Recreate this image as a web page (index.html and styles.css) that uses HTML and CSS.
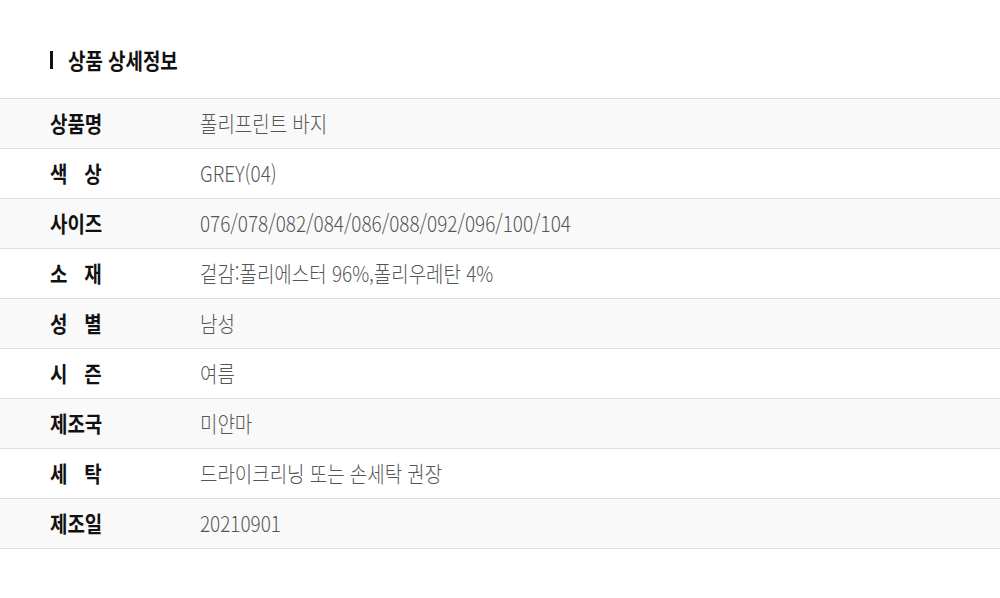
FILE: index.html
```html
<!DOCTYPE html>
<html lang="ko">
<head>
    <meta charset="UTF-8">
    <meta name="viewport" content="width=device-width, initial-scale=1.0">
    <title>상품 상세정보</title>
    <link rel="stylesheet" href="styles.css">
</head>
<body>
    <h2 class="title"><span class="txt">상품 상세정보</span></h2>
    <table class="info">
        <tr><th><span class="lbl">상품명</span></th><td><span class="val">폴리프린트 바지</span></td></tr>
        <tr><th><span class="lbl">색 상</span></th><td><span class="val">GREY(04)</span></td></tr>
        <tr><th><span class="lbl">사이즈</span></th><td><span class="val">076/078/082/084/086/088/092/096/100/104</span></td></tr>
        <tr><th><span class="lbl">소 재</span></th><td><span class="val">겉감:폴리에스터 96%,폴리우레탄 4%</span></td></tr>
        <tr><th><span class="lbl">성 별</span></th><td><span class="val">남성</span></td></tr>
        <tr><th><span class="lbl">시 즌</span></th><td><span class="val">여름</span></td></tr>
        <tr><th><span class="lbl">제조국</span></th><td><span class="val">미얀마</span></td></tr>
        <tr><th><span class="lbl">세 탁</span></th><td><span class="val">드라이크리닝 또는 손세탁 권장</span></td></tr>
        <tr><th><span class="lbl">제조일</span></th><td><span class="val">20210901</span></td></tr>
    </table>
</body>
</html>
```

FILE: styles.css
```css
body {
    font-family: "Noto Sans CJK KR", "Noto Sans", sans-serif;
    background-color: #fff;
    margin: 0;
    padding: 0;
    color: #222;
}
.title {
    margin: 0 0 27px;
    padding: 47px 0 0 50px;
    display: flex;
    align-items: center;
    font-size: 22px;
    font-weight: 700;
    line-height: 24px;
    color: #111;
}
.title::before {
    content: "";
    display: inline-block;
    width: 3px;
    height: 18px;
    margin: 2px 15px 0 0;
    background-color: #111;
}
.txt, .lbl, .val {
    display: inline-block;
    white-space: nowrap;
    transform: scaleX(0.86);
    transform-origin: left center;
}
.info {
    width: 100%;
    border-collapse: collapse;
    border-top: 1px solid #ddd;
}
.info th, .info td {
    height: 45px;
    padding: 0 0 4px;
    border-bottom: 1px solid #ddd;
    text-align: left;
    vertical-align: middle;
    line-height: 24px;
}
.info th {
    width: 150px;
    padding-left: 50px;
    font-size: 22px;
    font-weight: 700;
    color: #111;
}
.info td {
    font-size: 22px;
    font-weight: 300;
    color: #555;
}
.info tr:nth-child(odd) {
    background-color: #f9f9f9;
}
.lbl {
    width: 60px;
    text-align: justify;
    text-align-last: justify;
}
```
